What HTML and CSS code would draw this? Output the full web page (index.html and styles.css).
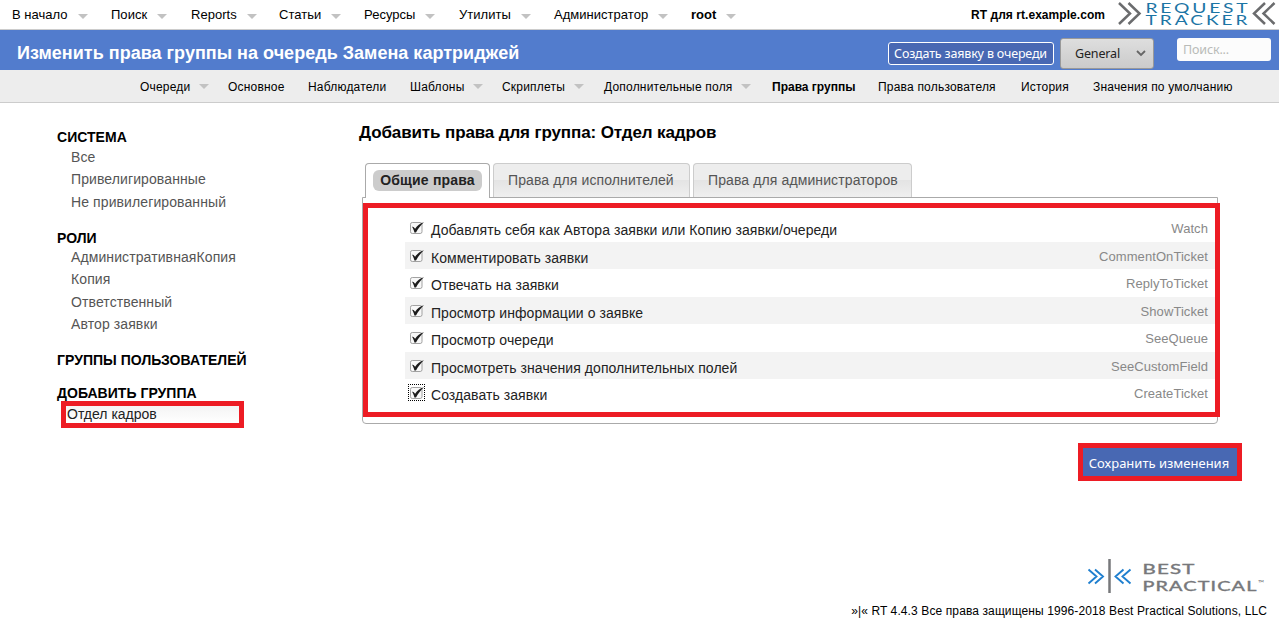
FILE: index.html
```html
<!DOCTYPE html>
<html lang="ru">
<head>
<meta charset="utf-8">
<title>Изменить права группы на очередь Замена картриджей</title>
<link rel="stylesheet" href="styles.css">
</head>
<body>
<header class="topbar">
  <nav class="main-nav">
    <a class="has-sub">В начало</a><a class="has-sub">Поиск</a><a class="has-sub">Reports</a><a class="has-sub">Статьи</a><a class="has-sub">Ресурсы</a><a class="has-sub">Утилиты</a><a class="has-sub">Администратор</a><a class="has-sub current">root</a>
  </nav>
  <div class="instance">RT для rt.example.com</div>
  <svg class="rt-logo" width="161" height="28" viewBox="0 0 161 28">
    <g fill="none" stroke="#6b6c6e" stroke-width="2.5">
      <path d="M1 3L12 13.5L1 24M10.500 3L21.500 13.500L10.500 24M147 3L136 13.500L147 24M156.500 3L145.500 13.500L156.500 24"/>
    </g>
    <g class="rt-word">
      <text x="27.500" y="13" textLength="105" lengthAdjust="spacingAndGlyphs">REQUEST</text>
      <text class="second" x="27.500" y="25" textLength="105" lengthAdjust="spacingAndGlyphs">TRACKER</text>
    </g>
  </svg>
</header>
<div class="titlebar">
  <h1>Изменить права группы на очередь Замена картриджей</h1>
  <button class="create">Создать заявку в очереди</button>
  <div class="select"><span>General</span><svg width="10" height="7" viewBox="0 0 10 7"><path d="M1 1L5 5L9 1" fill="none" stroke="#666" stroke-width="1.800"/></svg></div>
  <div class="search">Поиск...</div>
</div>
<nav class="sub-nav">
  <a class="has-sub">Очереди</a><a>Основное</a><a>Наблюдатели</a><a class="has-sub">Шаблоны</a><a class="has-sub">Скриплеты</a><a class="has-sub">Дополнительные поля</a><a class="current">Права группы</a><a>Права пользователя</a><a>История</a><a>Значения по умолчанию</a>
</nav>
<main class="content">
  <aside class="sidebar">
    <section><h3>СИСТЕМА</h3><ul><li>Все</li><li>Привелигированные</li><li>Не привилегированный</li></ul></section>
    <section><h3>РОЛИ</h3><ul class="roles"><li>АдминистративнаяКопия</li><li>Копия</li><li>Ответственный</li><li>Автор заявки</li></ul></section>
    <section><h3>ГРУППЫ ПОЛЬЗОВАТЕЛЕЙ</h3></section>
    <section><h3>ДОБАВИТЬ ГРУППА</h3><div class="group-input">Отдел кадров</div></section>
  </aside>
  <div class="editor">
    <h2>Добавить права для группа: Отдел кадров</h2>
    <div class="tabs"><div class="tab active"><span>Общие права</span></div><div class="tab">Права для исполнителей</div><div class="tab">Права для администраторов</div></div>
    <div class="panel">
      <div class="rights">
        <div class="right"><i class="check"></i><span>Добавлять себя как Автора заявки или Копию заявки/очереди</span><em>Watch</em></div>
        <div class="right"><i class="check"></i><span>Комментировать заявки</span><em>CommentOnTicket</em></div>
        <div class="right"><i class="check"></i><span>Отвечать на заявки</span><em>ReplyToTicket</em></div>
        <div class="right"><i class="check"></i><span>Просмотр информации о заявке</span><em>ShowTicket</em></div>
        <div class="right"><i class="check"></i><span>Просмотр очереди</span><em>SeeQueue</em></div>
        <div class="right"><i class="check"></i><span>Просмотреть значения дополнительных полей</span><em>SeeCustomField</em></div>
        <div class="right"><i class="check focused"></i><span>Создавать заявки</span><em>CreateTicket</em></div>
      </div>
      <div class="highlight"></div>
    </div>
    <button class="save">Сохранить изменения</button>
  </div>
</main>
<footer class="footer">
  <svg class="bp-logo" width="180" height="36" viewBox="0 0 180 36">
    <path d="M1.500 11.500L9.500 18.500L1.500 25.500M8 11.500L16 18.500L8 25.500M36.500 11.500L28.500 18.500L36.500 25.500M43.500 11.500L35.500 18.500L43.500 25.500" fill="none" stroke="#1f7fcf" stroke-width="1.900"/>
    <path d="M22.500 1V35" stroke="#77787b" stroke-width="2.500"/>
    <g class="bp-word">
      <text x="55.500" y="16.300" textLength="53" lengthAdjust="spacingAndGlyphs">BEST</text>
      <text x="55.500" y="33" textLength="115" lengthAdjust="spacingAndGlyphs">PRACTICAL</text>
      <text class="tm" x="171" y="28">™</text>
    </g>
  </svg>
  <p>»|« RT 4.4.3 Все права защищены 1996-2018 Best Practical Solutions, LLC</p>
</footer>
<script src="checks.js"></script>
</body>
</html>
```

FILE: checks.js
```js
// Fill every permission checkbox with its tick mark
document.querySelectorAll('.check').forEach(function (box) {
  box.innerHTML = '<svg width="15" height="15" viewBox="-1 -1 15 15"><rect x=".5" y="1.500" width="11.500" height="11" rx="1.800" fill="#f8f8f8" stroke="#a2a2a2"/><path transform="translate(0 1)" d="M2 4.800C3.300 4.300 4 5.400 5.100 6.700C7.300 3.500 9.800 1.500 13.900 .2C10.800 3.300 8.200 6.300 6 10.400L4.400 10.400C3.900 8.300 3.200 6.600 2 4.800Z" fill="#1c1c1c"/></svg>';
});
```

FILE: styles.css
```css
* { box-sizing: border-box; }
body { margin: 0; width: 1279px; height: 623px; overflow: hidden; background: #fff; color: #000; font-family: "Liberation Sans", Arial, sans-serif; display: flex; flex-direction: column; }
h1, h2, h3, ul, p { margin: 0; padding: 0; }
ul { list-style: none; }
a { white-space: nowrap; display: flex; align-items: center; }
button { font-family: "Noto Sans", sans-serif; font-size: 13px; padding: 0; white-space: nowrap; }

.has-sub::after { content: ""; border: 5px solid transparent; border-top-color: #c2c2c2; border-bottom: 0; margin-top: 3px; }

.topbar { height: 30px; flex: none; border-bottom: 1px solid #ccc; display: flex; font-size: 13px; line-height: 29px; }
.main-nav { display: grid; grid-template-columns: 99px 80px 88px 85px 95px 95px 137px 60px; padding-left: 12px; width: 944px; letter-spacing: .03px; }
.main-nav .has-sub::after { margin-left: 10px; }
.current { font-weight: bold; }
.instance { width: 161px; font-size: 12px; font-weight: bold; text-align: right; white-space: nowrap; line-height: 30px; letter-spacing: .05px; }
.rt-logo { margin-left: 13px; flex: none; }
.rt-word { font: 13.800px Lato, sans-serif; fill: #1c75a5; letter-spacing: 2px; }
.rt-word .second { font-size: 12.500px; }

.titlebar { height: 40px; flex: none; background: #527ccd; display: flex; align-items: flex-start; }
h1 { width: 888px; padding-left: 17px; font-size: 18px; line-height: 46px; color: #fff; white-space: nowrap; letter-spacing: .02px; }
.create { width: 166px; height: 23px; margin-top: 12px; border: 1px solid #fff; border-radius: 3px; background: #4868b3; color: #fff; line-height: 21px; font-size: 12.500px; letter-spacing: -.17px; padding-right: 1px; }
.select { width: 94px; height: 31px; margin: 8px 0 0 6px; border: 1px solid #999; border-radius: 3px; background: linear-gradient(#dedede, #cbcbcb); padding: 0 7px 0 14px; display: flex; align-items: center; justify-content: space-between; font: 12.500px "Noto Sans", sans-serif; letter-spacing: -.15px; color: #222; }
.search { width: 94px; height: 23px; margin: 8px 0 0 23px; background: #fcfcfc; border-radius: 3px; padding-left: 6px; font: 12.500px/23px "Noto Sans", sans-serif; letter-spacing: -.15px; color: #b9bbb8; }

.sub-nav { height: 33px; flex: none; background: #ededed; border-bottom: 1px solid #ccc; padding: 1px 0 0 140px; display: grid; grid-template-columns: 88px 80px 102px 92px 102px 168px 106px 143px 72px 150px; font-size: 12px; letter-spacing: .2px; }
.sub-nav .current { letter-spacing: 0; }
.sub-nav .has-sub::after { margin: 0 0 0 8.500px; }

.content { display: flex; height: 449px; flex: none; }
.sidebar { width: 359px; padding: 26px 0 0 57px; font-size: 14px; }
.sidebar h3 { font-size: 14px; line-height: 16px; white-space: nowrap; letter-spacing: .03px; }
.sidebar section { margin-bottom: 17px; }
.sidebar ul { padding: 1px 0 0 14px; color: #555; letter-spacing: .1px; }
.sidebar .roles { padding-top: 0; margin-bottom: -.3px; }
.sidebar li { line-height: 22.400px; height: 22.400px; }
.sidebar .roles li { line-height: 22.200px; height: 22.200px; }
.group-input { width: 183px; height: 27px; margin-left: 4px; border: 5px solid #ed1c24; background: linear-gradient(#f4f4f4, #fff); color: #222; padding-left: 1px; line-height: 17px; }

.editor { width: 883px; display: flex; flex-direction: column; }
h2 { font-size: 17px; line-height: 20px; margin-top: 20px; white-space: nowrap; letter-spacing: -.12px; }
.tabs { display: flex; gap: 3px; margin: 20px 0 0 6px; height: 34px; }
.tab { height: 34px; border: 1px solid #ccc; border-bottom: 0; border-radius: 4px 4px 0 0; background: linear-gradient(#ededed 0 50%, #e4e4e4 50%, #efefef); color: #555; font-size: 14px; line-height: 33px; padding: 0 14px; white-space: nowrap; letter-spacing: .11px; }
.tab:nth-child(2) { width: 197px; }
.tab:nth-child(3) { width: 219px; }
.tab.active { width: 125px; height: 35px; padding: 6px 7px 0; border-color: #aaa; background: #fff; color: #222; font-weight: bold; z-index: 1; letter-spacing: .17px; }
.tab.active span { display: block; height: 21px; line-height: 20px; border-radius: 6px; background: #ccc; text-align: center; }
.panel { position: relative; width: 856px; height: 227px; margin-left: 3px; border: 1px solid #aaa; border-radius: 0 0 4px 4px; padding: 16px 2px 0 42px; }
.right { height: 27.500px; padding: 0 7px 0 4px; display: flex; align-items: flex-start; font-size: 14px; line-height: 33px; color: #222; white-space: nowrap; }
.right:nth-child(even) { background: linear-gradient(#f3f3f3, #f3f3f3) 0 0 / 100% 27px no-repeat; }
.right span { flex: 1; letter-spacing: .06px; }
.right em { font-style: normal; font-size: 13px; line-height: 29px; color: #888; letter-spacing: .07px; }
.check { width: 15px; height: 15px; line-height: 0; margin: 6px 7px 0 0; flex: none; }
.check.focused { outline: 1px dotted #000; }
.highlight { position: absolute; left: 0; top: 5px; width: 857px; height: 214px; border: 5px solid #ed1c24; }
.save { width: 164px; height: 38px; margin-top: 19px; align-self: flex-end; border: 5px solid #ed1c24; background: #4868b3; color: #fff; padding: 2px 2px 0 0; }

.footer { flex: 1; display: flex; flex-direction: column; align-items: flex-end; padding: 6px 12px 0 0; }
.bp-logo { flex: none; }
.bp-word { font: 14.200px Lato, sans-serif; fill: #77787b; stroke: #77787b; stroke-width: .4px; letter-spacing: .8px; }
.bp-word .tm { font-size: 8px; stroke: none; }
.footer p { font-size: 12px; line-height: 16px; margin-top: 9px; letter-spacing: .11px; }
```
